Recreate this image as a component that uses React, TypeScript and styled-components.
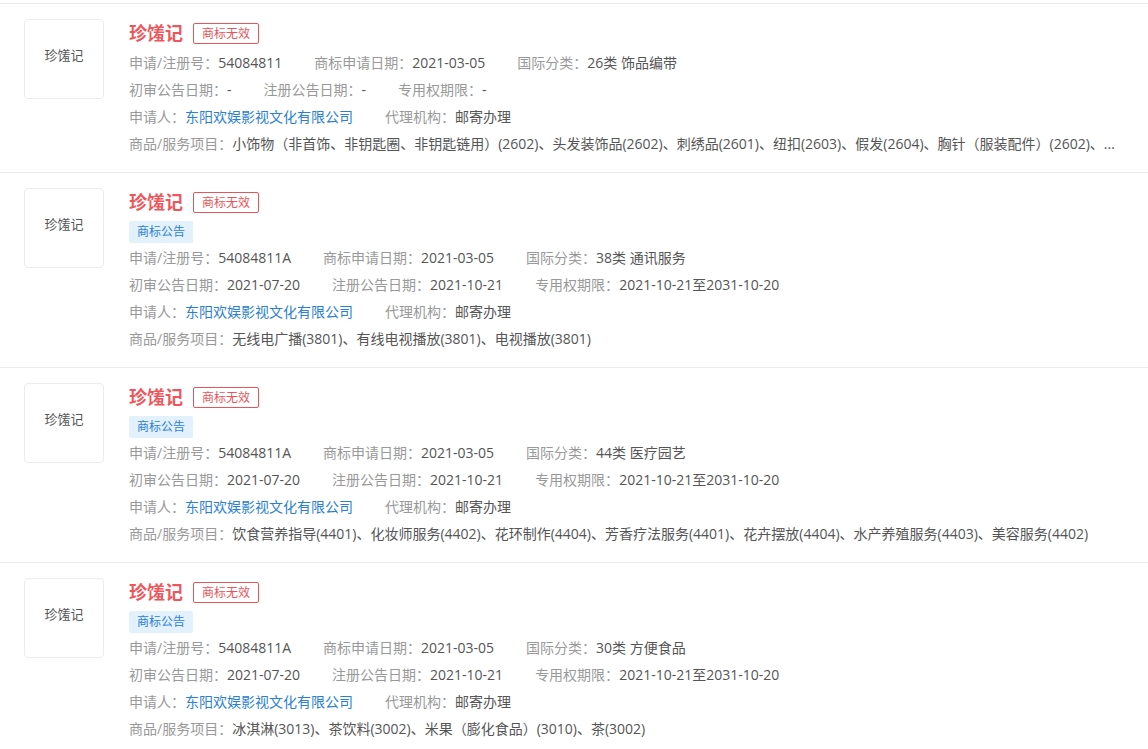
import React from "react";
import styled, { createGlobalStyle } from "styled-components";

const Global = createGlobalStyle`
  html, body { margin: 0; padding: 0; background: #fff; }
  body { font-family: "Open Sans", "Noto Sans CJK SC", "Noto Sans", sans-serif; }
  * { box-sizing: border-box; }
`;

const List = styled.div`
  padding-top: 3px;
  width: 1148px;
`;

const Item = styled.div`
  display: flex;
  gap: 25px;
  padding: 15px 18px 15px 24px;
  border-top: 1px solid #ebebeb;
  &:last-child { border-bottom: 1px solid #ebebeb; }
`;

const Logo = styled.div`
  flex: none;
  width: 80px;
  height: 80px;
  border: 1px solid #ececec;
  border-radius: 4px;
  display: flex;
  align-items: center;
  justify-content: center;
  padding-bottom: 10px;
  font-size: 13px;
  color: #555;
`;

const Content = styled.div`
  flex: 1;
  min-width: 0;
`;

const TitleRow = styled.div`
  display: flex;
  align-items: center;
  height: 28px;
  margin-bottom: 2px;
`;

const Title = styled.span`
  font-size: 18px;
  font-weight: 700;
  color: #ef565c;
  line-height: 28px;
`;

const InvalidTag = styled.span`
  margin-left: 10px;
  height: 21px;
  line-height: 19px;
  padding: 0 8px;
  font-size: 12px;
  color: #e8545a;
  border: 1px solid #e8545a;
  border-radius: 2px;
`;

const NoticeTag = styled.div`
  display: inline-block;
  margin: 3px 0 1px;
  height: 22px;
  line-height: 22px;
  padding: 0 8px;
  font-size: 12px;
  color: #2b7fd6;
  background: #e3f1fd;
  border-radius: 2px;
`;

const Row = styled.div`
  display: flex;
  height: 27px;
  line-height: 27px;
  font-size: 14px;
  white-space: nowrap;
`;

const Field = styled.span`
  flex: none;
  margin-right: 32px;
`;

const Label = styled.span`
  color: #999;
`;

const Value = styled.span<{ $link?: boolean }>`
  color: ${(p) => (p.$link ? "#2a7fd4" : "#555")};
`;

const Goods = styled.div`
  height: 27px;
  line-height: 27px;
  font-size: 14px;
  white-space: nowrap;
  overflow: hidden;
  text-overflow: ellipsis;
`;

type Rec = {
  notice: boolean;
  regNo: string;
  cls: string;
  first: string;
  reg: string;
  term: string;
  goods: string;
};

const data: Rec[] = [
  {
    notice: false,
    regNo: "54084811",
    cls: "26类 饰品编带",
    first: "-",
    reg: "-",
    term: "-",
    goods:
      "小饰物（非首饰、非钥匙圈、非钥匙链用）(2602)、头发装饰品(2602)、刺绣品(2601)、纽扣(2603)、假发(2604)、胸针（服装配件）(2602)、...",
  },
  {
    notice: true,
    regNo: "54084811A",
    cls: "38类 通讯服务",
    first: "2021-07-20",
    reg: "2021-10-21",
    term: "2021-10-21至2031-10-20",
    goods: "无线电广播(3801)、有线电视播放(3801)、电视播放(3801)",
  },
  {
    notice: true,
    regNo: "54084811A",
    cls: "44类 医疗园艺",
    first: "2021-07-20",
    reg: "2021-10-21",
    term: "2021-10-21至2031-10-20",
    goods:
      "饮食营养指导(4401)、化妆师服务(4402)、花环制作(4404)、芳香疗法服务(4401)、花卉摆放(4404)、水产养殖服务(4403)、美容服务(4402)",
  },
  {
    notice: true,
    regNo: "54084811A",
    cls: "30类 方便食品",
    first: "2021-07-20",
    reg: "2021-10-21",
    term: "2021-10-21至2031-10-20",
    goods: "冰淇淋(3013)、茶饮料(3002)、米果（膨化食品）(3010)、茶(3002)",
  },
];

export default function App() {
  return (
    <>
      <Global />
      <List>
        {data.map((r, i) => (
          <Item key={i}>
            <Logo>珍馐记</Logo>
            <Content>
              <TitleRow>
                <Title>珍馐记</Title>
                <InvalidTag>商标无效</InvalidTag>
              </TitleRow>
              {r.notice && <NoticeTag>商标公告</NoticeTag>}
              <Row>
                <Field>
                  <Label>申请/注册号：</Label>
                  <Value>{r.regNo}</Value>
                </Field>
                <Field>
                  <Label>商标申请日期：</Label>
                  <Value>2021-03-05</Value>
                </Field>
                <Field>
                  <Label>国际分类：</Label>
                  <Value>{r.cls}</Value>
                </Field>
              </Row>
              <Row>
                <Field>
                  <Label>初审公告日期：</Label>
                  <Value>{r.first}</Value>
                </Field>
                <Field>
                  <Label>注册公告日期：</Label>
                  <Value>{r.reg}</Value>
                </Field>
                <Field>
                  <Label>专用权期限：</Label>
                  <Value>{r.term}</Value>
                </Field>
              </Row>
              <Row>
                <Field>
                  <Label>申请人：</Label>
                  <Value $link>东阳欢娱影视文化有限公司</Value>
                </Field>
                <Field>
                  <Label>代理机构：</Label>
                  <Value>邮寄办理</Value>
                </Field>
              </Row>
              <Goods>
                <Label>商品/服务项目：</Label>
                <Value>{r.goods}</Value>
              </Goods>
            </Content>
          </Item>
        ))}
      </List>
    </>
  );
}
